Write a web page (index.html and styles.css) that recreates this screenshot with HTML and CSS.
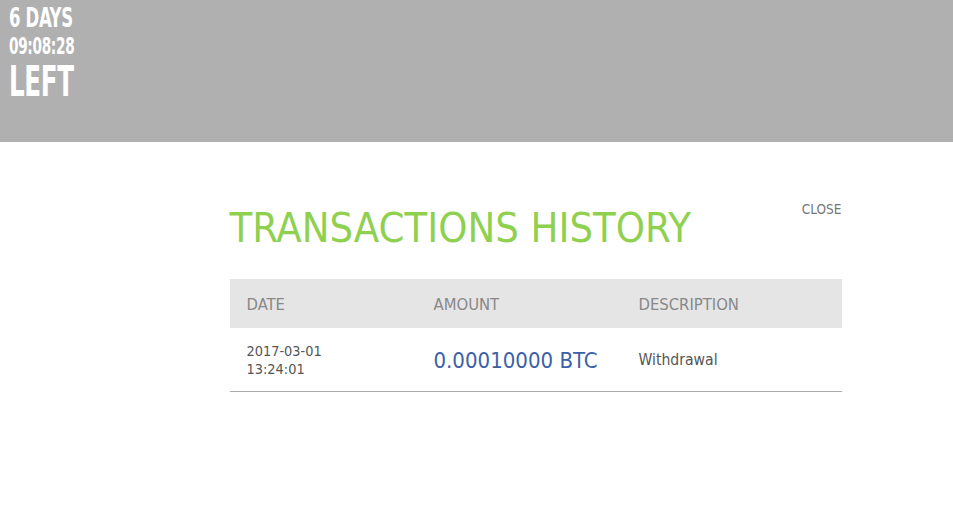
FILE: index.html
```html
<!DOCTYPE html>
<html lang="en">
<head>
  <meta charset="UTF-8" />
  <title>Transactions History</title>
  <link rel="stylesheet" href="styles.css">
</head>
<body>
  <div id="banner">
    <div class="timer">
      <div class="days">6 DAYS</div>
      <div class="clock">09:08:28</div>
      <div class="left">LEFT</div>
    </div>
  </div>

  <div id="container">
    <div class="modalHead">
      <h1>TRANSACTIONS HISTORY</h1>
      <a href="#" class="close">CLOSE</a>
    </div>

    <table class="history">
      <thead>
        <tr>
          <th class="colDate">DATE</th>
          <th class="colAmount">AMOUNT</th>
          <th>DESCRIPTION</th>
        </tr>
      </thead>
      <tbody>
        <tr>
          <td class="date">2017-03-01<br>13:24:01</td>
          <td class="amount">0.00010000 BTC</td>
          <td class="desc">Withdrawal</td>
        </tr>
      </tbody>
    </table>
  </div>
</body>
</html>
```

FILE: styles.css
```css
body {
  margin: 0;
  font-family: "DejaVu Sans Condensed", "DejaVu Sans", sans-serif;
  background: #ffffff;
}

#banner {
  background-color: #b0b0b0;
  height: 142px;
  padding: 4px 9px 0;
  box-sizing: border-box;
}

.timer {
  color: #ffffff;
  font-family: "DejaVu Sans Condensed", "Liberation Sans Narrow", sans-serif;
  font-weight: bold;
  line-height: 1;
  letter-spacing: -0.5px;
}

.days {
  font-size: 27px;
  transform: scaleX(0.68);
  transform-origin: left;
}

.clock {
  font-size: 23px;
  margin-top: 4px;
  transform: scaleX(0.66);
  transform-origin: left;
}

.left {
  font-size: 42px;
  margin-top: 3px;
  transform: scaleX(0.65);
  transform-origin: left;
}

#container {
  width: 612px;
  margin: 0 auto;
  padding-top: 62px;
  position: relative;
  left: 59px;
}

.modalHead {
  display: flex;
  justify-content: space-between;
  align-items: flex-start;
}

h1 {
  margin: 0;
  font-weight: normal;
  font-size: 41.3px;
  color: #8fd14f;
  line-height: 1.2;
}

.close {
  color: #777777;
  font-size: 13.5px;
  text-decoration: none;
  margin-top: -3px;
}

.history {
  width: 100%;
  border-collapse: collapse;
  margin-top: 25px;
}

.history th {
  background: #e5e5e5;
  color: #888888;
  font-weight: normal;
  font-size: 16.5px;
  text-align: left;
  height: 46px;
  padding: 3px 0 0 17px;
}

.colDate {
  width: 170px;
}

.colAmount {
  width: 188px;
}

.history td {
  padding: 2px 0 0 17px;
  height: 61px;
  border-bottom: 1px solid #aaaaaa;
}

.date {
  color: #555555;
  font-size: 14.4px;
  line-height: 18px;
}

.amount {
  color: #3d5fa8;
  font-size: 22px;
}

.desc {
  color: #555555;
  font-size: 15.6px;
}
```
